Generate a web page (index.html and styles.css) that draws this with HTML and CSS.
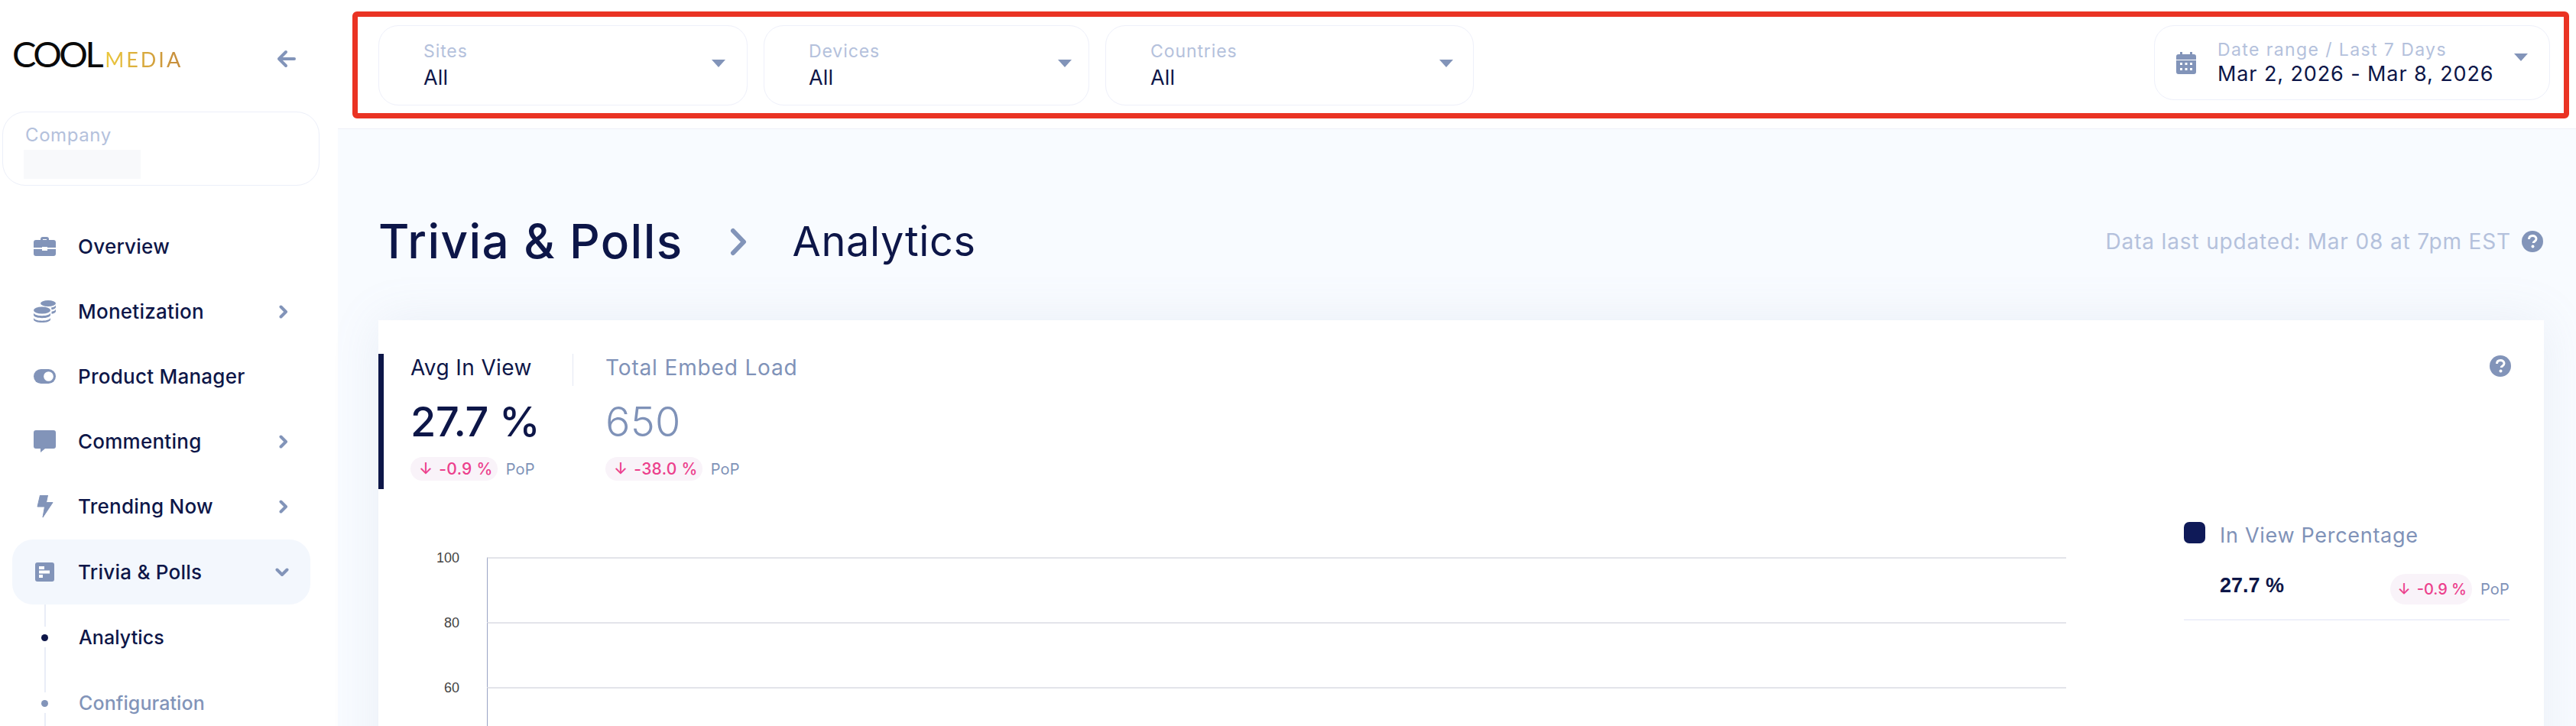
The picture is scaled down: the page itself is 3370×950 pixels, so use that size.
FILE: index.html
```html
<!DOCTYPE html>
<html lang="en">
<head>
<meta charset="utf-8">
<title>Trivia &amp; Polls Analytics</title>
<link rel="stylesheet" href="styles.css">
</head>
<body>
<div class="app">
  <aside class="sidebar">
    <div class="brand">
      <div class="logo"><span class="logo-cool">COOL</span><span class="logo-media">MEDIA</span></div>
      <svg class="back" viewBox="0 0 25 24"><path d="M12 3 3 12l9 9M3 12h20" fill="none" stroke="#8294b9" stroke-width="4" stroke-linecap="round" stroke-linejoin="round"/></svg>
    </div>
    <div class="company">
      <div class="company-label">Company</div>
      <div class="company-value"></div>
    </div>
    <nav class="nav">
      <div class="nav-item">
        <svg class="nav-icon" viewBox="0 0 29 25"><path d="M9 5V3a3 3 0 0 1 3-3h5a3 3 0 0 1 3 3v2h-3V3h-5v2z" fill="#8294b9"/><path d="M3 4h23a3 3 0 0 1 3 3v7H18v-1h-7v1H0V7a3 3 0 0 1 3-3zM0 16h11v2h7v-2h11v6a3 3 0 0 1-3 3H3a3 3 0 0 1-3-3z" fill="#8294b9"/></svg>
        <span class="nav-text">Overview</span>
      </div>
      <div class="nav-item">
        <svg class="nav-icon" viewBox="0 0 29 29"><g fill="#8294b9"><ellipse cx="19" cy="4" rx="10" ry="4"/><path d="M23 9.600c3-.6 6-1.800 6-3.600v3c0 1.400-2.400 2.700-5.500 3.300zM23.500 14.800c3-.6 5.500-1.800 5.500-3.300v3c0 1.400-2.400 2.700-5.500 3.300z"/><ellipse cx="11" cy="13" rx="11" ry="4.500"/><path d="M0 16c0 2.500 5 4.200 11 4.200S22 18.500 22 16v3c0 2.500-5 4.200-11 4.200S0 21.500 0 19zM0 22.500c0 2.500 5 4.200 11 4.200s11-1.700 11-4.200V25c0 2.500-5 4-11 4S0 27.500 0 25z"/></g></svg>
        <span class="nav-text">Monetization</span>
        <svg class="chev" viewBox="0 0 12 18"><path d="m2.500 2.500 6.500 6.500-6.500 6.500" fill="none" stroke="#8294b9" stroke-width="4" stroke-linecap="round" stroke-linejoin="round"/></svg>
      </div>
      <div class="nav-item">
        <svg class="nav-icon" viewBox="0 0 32 21"><rect width="32" height="21" rx="10.500" fill="#8294b9"/><circle cx="21.500" cy="10.500" r="7" fill="#fff"/></svg>
        <span class="nav-text">Product Manager</span>
      </div>
      <div class="nav-item">
        <svg class="nav-icon" viewBox="0 0 29 29"><path d="M3 0h23a3 3 0 0 1 3 3v18a3 3 0 0 1-3 3H15l-6 5v-5H3a3 3 0 0 1-3-3V3a3 3 0 0 1 3-3z" fill="#8294b9"/></svg>
        <span class="nav-text">Commenting</span>
        <svg class="chev" viewBox="0 0 12 18"><path d="m2.500 2.500 6.500 6.500-6.500 6.500" fill="none" stroke="#8294b9" stroke-width="4" stroke-linecap="round" stroke-linejoin="round"/></svg>
      </div>
      <div class="nav-item">
        <svg class="nav-icon" viewBox="0 0 29 29"><path d="M8.500 0h10l-2 9.500h8.500L12 29l2.500-14H5z" fill="#8294b9" stroke="#8294b9" stroke-linejoin="round"/></svg>
        <span class="nav-text">Trending Now</span>
        <svg class="chev" viewBox="0 0 12 18"><path d="m2.500 2.500 6.500 6.500-6.500 6.500" fill="none" stroke="#8294b9" stroke-width="4" stroke-linecap="round" stroke-linejoin="round"/></svg>
      </div>
      <div class="nav-item nav-active">
        <svg class="nav-icon" viewBox="0 0 29 25"><rect x="2" width="25" height="25" rx="3" fill="#8294b9"/><path d="M7 5h7v4H7zM7 10.500h14v4H7zM7 16h5v4H7z" fill="#fff"/></svg>
        <span class="nav-text">Trivia &amp; Polls</span>
        <svg class="chev-down" viewBox="0 0 18 12"><path d="m2.500 2.500 6.500 6.500 6.500-6.500" fill="none" stroke="#8294b9" stroke-width="4" stroke-linecap="round" stroke-linejoin="round"/></svg>
      </div>
      <div class="sub-item sub-current"><span class="sub-dot"></span><span class="sub-text">Analytics</span></div>
      <div class="sub-item"><span class="sub-dot"></span><span class="sub-text">Configuration</span></div>
    </nav>
  </aside>

  <main class="main">
    <header class="topbar">
      <div class="filters">
        <div class="select select-sites">
          <div class="select-text"><div class="select-label">Sites</div><div class="select-value">All</div></div>
          <span class="caret"></span>
        </div>
        <div class="select select-devices">
          <div class="select-text"><div class="select-label">Devices</div><div class="select-value">All</div></div>
          <span class="caret"></span>
        </div>
        <div class="select select-countries">
          <div class="select-text"><div class="select-label">Countries</div><div class="select-value">All</div></div>
          <span class="caret"></span>
        </div>
        <div class="date-select">
          <svg class="calendar" viewBox="0 0 26 29"><path d="M5 0h3v4H5zM18 0h3v4h-3z" fill="#8294b9"/><path fill-rule="evenodd" d="M3 3h20a3 3 0 0 1 3 3v4H0V6a3 3 0 0 1 3-3zM0 11h26v15a3 3 0 0 1-3 3H3a3 3 0 0 1-3-3zm5 3v3h3v-3zm6.500 0v3h3v-3zm6.500 0v3h3v-3zM5 21v3h3v-3zm6.500 0v3h3v-3zm6.500 0v3h3v-3z" fill="#8294b9"/></svg>
          <div class="date-text"><div class="select-label">Date range / Last 7 Days</div><div class="select-value">Mar 2, 2026 - Mar 8, 2026</div></div>
          <span class="caret caret-date"></span>
        </div>
      </div>
    </header>

    <section class="content">
      <div class="page-head">
        <h1 class="crumb-main">Trivia &amp; Polls</h1>
        <svg class="crumb-sep" viewBox="0 0 23 37"><path d="m4 4 14 14.500L4 33" fill="none" stroke="#8294b9" stroke-width="6" stroke-linecap="round" stroke-linejoin="round"/></svg>
        <h2 class="crumb-sub">Analytics</h2>
        <div class="updated">Data last updated: Mar 08 at 7pm EST</div>
        <svg class="help" viewBox="0 0 28 28"><circle cx="14" cy="14" r="14" fill="#8294b9"/><path d="M9.500 11c0-3 2-4.500 4.700-4.500S19 8 19 10.500c0 3.500-3.800 3.300-3.800 5.500" fill="none" stroke="#fff" stroke-width="3"/><circle cx="14.500" cy="20.500" r="2" fill="#fff"/></svg>
      </div>

      <div class="card">
        <div class="card-top">
          <div class="metric metric-active">
            <div class="metric-title">Avg In View</div>
            <div class="metric-value">27.7 %</div>
            <div class="delta-row"><span class="badge"><span class="badge-arrow">↓</span>-0.9 %</span><span class="pop">PoP</span></div>
          </div>
          <div class="metric metric-idle">
            <div class="metric-title">Total Embed Load</div>
            <div class="metric-value">650</div>
            <div class="delta-row"><span class="badge"><span class="badge-arrow">↓</span>-38.0 %</span><span class="pop">PoP</span></div>
          </div>
          <svg class="help help-card" viewBox="0 0 28 28"><circle cx="14" cy="14" r="14" fill="#8294b9"/><path d="M9.500 11c0-3 2-4.500 4.700-4.500S19 8 19 10.500c0 3.500-3.800 3.300-3.800 5.500" fill="none" stroke="#fff" stroke-width="3"/><circle cx="14.500" cy="20.500" r="2" fill="#fff"/></svg>
        </div>
        <div class="card-body">
          <div class="chart">
            <div class="chart-row"><span class="tick">100</span><div class="plot"></div></div>
            <div class="chart-row"><span class="tick">80</span><div class="plot"></div></div>
            <div class="chart-row"><span class="tick">60</span><div class="plot"></div></div>
          </div>
          <div class="legend">
            <div class="legend-head"><span class="legend-swatch"></span><span class="legend-name">In View Percentage</span></div>
            <div class="legend-row"><span class="legend-value">27.7 %</span><span class="badge badge-legend"><span class="badge-arrow">↓</span>-0.9 %</span><span class="pop">PoP</span></div>
          </div>
        </div>
      </div>
    </section>
  </main>
</div>
</body>
</html>
```
FILE: styles.css
```css
* { box-sizing: border-box; }
html, body { margin: 0; height: 950px; overflow: hidden; background: #fff; }
body { font-family: "Inter", "Noto Sans", sans-serif; color: #0d1648; }
.app { display: flex; height: 950px; overflow: hidden; }

/* sidebar */
.sidebar { width: 442px; flex: none; background: #fff; padding-left: 3px; overflow: hidden; }
.brand { height: 146px; display: flex; align-items: flex-start; padding: 50px 0 0 13px; position: relative; }
.logo { display: flex; align-items: baseline; width: 346px; }
.logo-cool { font-family: "Lato", sans-serif; font-size: 47px; line-height: 40px; letter-spacing: -3.500px; color: #0a0a0a; font-weight: 400; }
.logo-media { font-family: "Lato", sans-serif; font-size: 27px; line-height: 40px; letter-spacing: 3px; margin-left: 5px; font-weight: 400; background: linear-gradient(90deg, #ecc83c, #c48a3c); -webkit-background-clip: text; background-clip: text; color: transparent; }
.back { width: 25px; height: 24px; margin-top: 15px; }
.company { width: 415px; height: 97px; border: 1px solid #eceff9; border-radius: 30px; padding: 17px 0 0 27px; }
.company-label { font-size: 24px; line-height: 26px; color: #b4c1dc; letter-spacing: .6px; font-weight: 400; margin-left: 2px; }
.company-value { width: 153px; height: 38px; background: #f8f9fb; margin-top: 6px; }
.nav { width: 390px; margin: 37px 0 0 13px; }
.nav-item { height: 85px; display: flex; align-items: center; padding: 0 29px 0 28px; border-radius: 27px; }
.nav-icon { width: 29px; height: 29px; flex: none; margin-right: 29px; }
.nav-text { flex: 1; font-size: 26px; font-weight: 500; letter-spacing: .25px; color: #0d1648; }
.chev { width: 12px; height: 18px; flex: none; }
.chev-down { width: 18px; height: 12px; flex: none; margin-right: -1px; }
.nav-active { background: #f3f7fd; margin-top: 1px; }
.sub-item { height: 86px; display: flex; align-items: center; padding-left: 38px; position: relative; }
.sub-item::before, .sub-item::after { content: ""; position: absolute; left: 42px; width: 2px; background: #e9edf7; }
.sub-item::before { top: 0; height: 29px; }
.sub-item::after { top: 56px; height: 30px; }
.sub-dot { width: 9px; height: 9px; border-radius: 50%; background: #8294b9; flex: none; margin-right: 40px; }
.sub-text { font-size: 25px; font-weight: 500; letter-spacing: .1px; color: #8294b9; }
.sub-current .sub-dot { background: #0d1648; }
.sub-current .sub-text { color: #0d1648; }

/* top bar */
.main { flex: 1; min-width: 0; display: flex; flex-direction: column; background: #f8fbff; }
.topbar { height: 169px; flex: none; background: #fff; border-bottom: 1px solid #edf0f7; padding: 15px 9px 0 19px; }
.filters { height: 140px; border: 7px solid #ea3323; border-radius: 6px; display: flex; align-items: flex-start; padding: 11px 18px 0 27px; gap: 21px; }
.select, .date-select { background: #fff; border: 1px solid #eef0fa; border-radius: 26px; display: flex; align-items: center; }
.select { height: 105px; padding: 0 28px 0 58px; }
.select-sites { width: 483px; }
.select-devices { width: 426px; padding-right: 22px; }
.select-countries { width: 482px; padding-right: 26px; }
.select-label { font-size: 23px; line-height: 28px; color: #b4c1dc; letter-spacing: .9px; }
.select-text { flex: 1; }
.select-value { font-size: 27px; line-height: 32px; color: #0d1648; margin-top: 5px; letter-spacing: .2px; }
.caret { width: 0; height: 0; flex: none; border-left: 9px solid transparent; border-right: 9px solid transparent; border-top: 10px solid #8294b9; margin-top: -5px; }
.date-select { height: 98px; width: 518px; margin-left: auto; padding: 0 28px 0 28px; }
.calendar { width: 26px; height: 29px; flex: none; margin-right: 28px; }
.date-text { flex: 1; }
.date-text .select-label { letter-spacing: 1.400px; }
.date-text .select-value { margin-top: 2px; letter-spacing: .9px; }
.caret-date { margin-top: -14px; }

/* content */
.content { flex: 1; min-height: 0; padding: 0 42px 0 53px; }
.page-head { height: 250px; display: flex; align-items: center; padding-top: 43px; padding-right: 1px; }
.crumb-main { margin: 0; font-size: 62px; line-height: 70px; font-weight: 500; letter-spacing: 1.400px; color: #0d1648; }
.crumb-sep { width: 23px; height: 37px; margin: 2px 58px 0 62px; flex: none; }
.crumb-sub { margin: 0; font-size: 54px; line-height: 70px; font-weight: 400; letter-spacing: .7px; color: #0d1648; flex: 1; }
.updated { font-size: 28px; color: #b4c1dc; letter-spacing: .85px; }
.help { width: 28px; height: 28px; flex: none; margin-left: 14px; }
.card { background: #fff; height: 600px; padding-top: 44px; box-shadow: 0 0 60px rgba(130, 148, 185, .12); }
.card-top { display: flex; align-items: flex-start; padding-right: 43px; height: 177px; }
.metric { height: 177px; padding-top: 3px; }
.metric-active { width: 298px; border-left: 7px solid #0d1648; padding-left: 35px; position: relative; }
.metric-active::after { content: ""; position: absolute; left: 247px; top: 0; width: 1px; height: 42px; background: #e3e8f4; }
.metric-title { font-size: 28px; line-height: 30px; font-weight: 400; letter-spacing: .4px; color: #0d1648; }
.metric-value { font-size: 54px; line-height: 62px; margin-top: 25px; font-weight: 500; letter-spacing: -.4px; color: #0d1648; }
.delta-row { display: flex; align-items: center; margin-top: 15px; }
.badge { height: 31px; display: inline-flex; align-items: center; padding: 0 6px 0 11px; border-radius: 16px; background: #f9f3f9; color: #ec3f8c; font-size: 21px; font-weight: 500; letter-spacing: .3px; }
.badge-arrow { margin-right: 8px; }
.pop { font-size: 20px; color: #7f92b8; margin-left: 11px; letter-spacing: .2px; }
.metric-idle { flex: 1; margin-left: -1px; }
.metric-idle .metric-title, .metric-idle .metric-value { color: #7f92b8; }
.metric-idle .metric-title { letter-spacing: .85px; }
.metric-idle .metric-value { font-weight: 300; letter-spacing: .3px; }
.help-card { margin: 2px 0 0 0; }
.card-body { display: flex; padding-right: 45px; }
.chart { width: 2208px; padding-top: 89px; }
.chart-row { display: flex; height: 85px; }
.tick { width: 106px; font-family: "Liberation Sans", sans-serif; font-size: 18px; line-height: 20px; color: #444; text-align: right; margin-top: -9px; height: 20px; flex: none; }
.plot { width: 2067px; margin-left: 36px; border-top: 2px solid #e3e4ea; border-left: 1px solid #9aa4c4; }
.legend { width: 426px; margin-left: 154px; padding-top: 43px; height: 190px; }
.legend-head { display: flex; align-items: center; height: 28px; }
.legend-swatch { width: 28px; height: 28px; border-radius: 7px; background: #0f1a58; flex: none; margin-right: 19px; }
.legend-name { font-size: 27px; letter-spacing: .7px; color: #7f92b8; position: relative; top: 3px; }
.legend-row { display: flex; align-items: center; margin-top: 35px; padding-bottom: 24px; padding-left: 47px; border-bottom: 2px solid #eef0fa; height: 66px; }
.legend-value { flex: 1; font-family: "Liberation Sans", sans-serif; font-size: 27px; font-weight: 700; color: #0d1648; }
.badge-legend { height: 40px; border-radius: 20px; padding: 0 7px 0 9px; margin-top: 10px; letter-spacing: 0; font-size: 20px; }
.legend-row .pop { margin-top: 10px; }
```
